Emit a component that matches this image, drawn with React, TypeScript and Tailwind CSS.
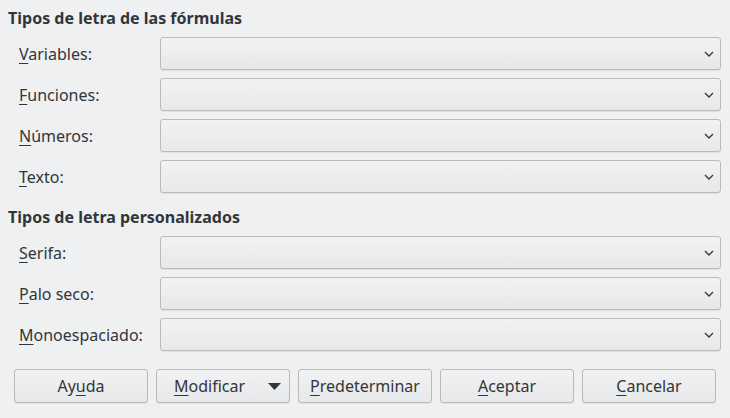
import React from "react";

const Chevron = () => (
  <svg width="10" height="6" viewBox="0 0 10 6" className="shrink-0">
    <path d="M1 1 L5 5 L9 1" fill="none" stroke="#31363b" strokeWidth="1.3" />
  </svg>
);

const Combo = () => (
  <div className="flex-1 h-[33px] rounded-[3px] border border-[#b9babb] bg-gradient-to-b from-[#f2f2f3] to-[#e7e8e9] shadow-[0_1px_0_rgba(0,0,0,0.06)] flex items-center justify-end pr-[6px]">
    <Chevron />
  </div>
);

const Label = ({ u, rest }: { u: string; rest: string }) => (
  <div className="w-[152px] pl-[11px] text-[16px] text-[#31363b] leading-none">
    <span className="underline underline-offset-[3px] decoration-1">{u}</span>
    {rest}
  </div>
);

const Row = ({ u, rest }: { u: string; rest: string }) => (
  <div className="flex items-center">
    <Label u={u} rest={rest} />
    <Combo />
  </div>
);

const Btn = ({ children }: { children: React.ReactNode }) => (
  <div className="w-[134px] h-[34px] rounded-[3px] border border-[#b9babb] bg-gradient-to-b from-[#f2f2f3] to-[#e7e8e9] shadow-[0_1px_0_rgba(0,0,0,0.06)] flex items-center justify-center text-[16px] text-[#31363b]">
    {children}
  </div>
);

const U = ({ c }: { c: string }) => (
  <span className="underline underline-offset-[3px] decoration-1">{c}</span>
);

export default function App() {
  return (
    <div
      className="w-[730px] h-[418px] bg-[#eff0f1] text-[#31363b] pl-[8px] pr-[9px] pt-[7px] flex flex-col"
      style={{ fontFamily: '"Noto Sans", "Open Sans", sans-serif' }}
    >
      <div className="h-[22px] flex items-center text-[16px] font-bold">Tipos de letra de las fórmulas</div>
      <div className="mt-[8px] flex flex-col gap-[8px]">
        <Row u="V" rest="ariables:" />
        <Row u="F" rest="unciones:" />
        <Row u="N" rest="úmeros:" />
        <Row u="T" rest="exto:" />
      </div>
      <div className="mt-[13px] h-[22px] flex items-center text-[16px] font-bold">Tipos de letra personalizados</div>
      <div className="mt-[8px] flex flex-col gap-[8px]">
        <Row u="S" rest="erifa:" />
        <Row u="P" rest="alo seco:" />
        <Row u="M" rest="onoespaciado:" />
      </div>
      <div className="mt-[18px] pl-[6px] flex gap-[8px]">
        <Btn>
          Ay<U c="u" />da
        </Btn>
        <div className="w-[134px] h-[34px] rounded-[3px] border border-[#b9babb] bg-gradient-to-b from-[#f2f2f3] to-[#e7e8e9] shadow-[0_1px_0_rgba(0,0,0,0.06)] flex items-center text-[16px] text-[#31363b] pl-[17px] pr-[8px]">
          <span className="flex-1">
            <U c="M" />odificar
          </span>
          <svg width="13" height="7" viewBox="0 0 13 7">
            <path d="M0 0 H13 L6.5 7 Z" fill="#31363b" />
          </svg>
        </div>
        <Btn>
          <U c="P" />redeterminar
        </Btn>
        <Btn>
          <U c="A" />ceptar
        </Btn>
        <Btn>
          <U c="C" />ancelar
        </Btn>
      </div>
    </div>
  );
}
